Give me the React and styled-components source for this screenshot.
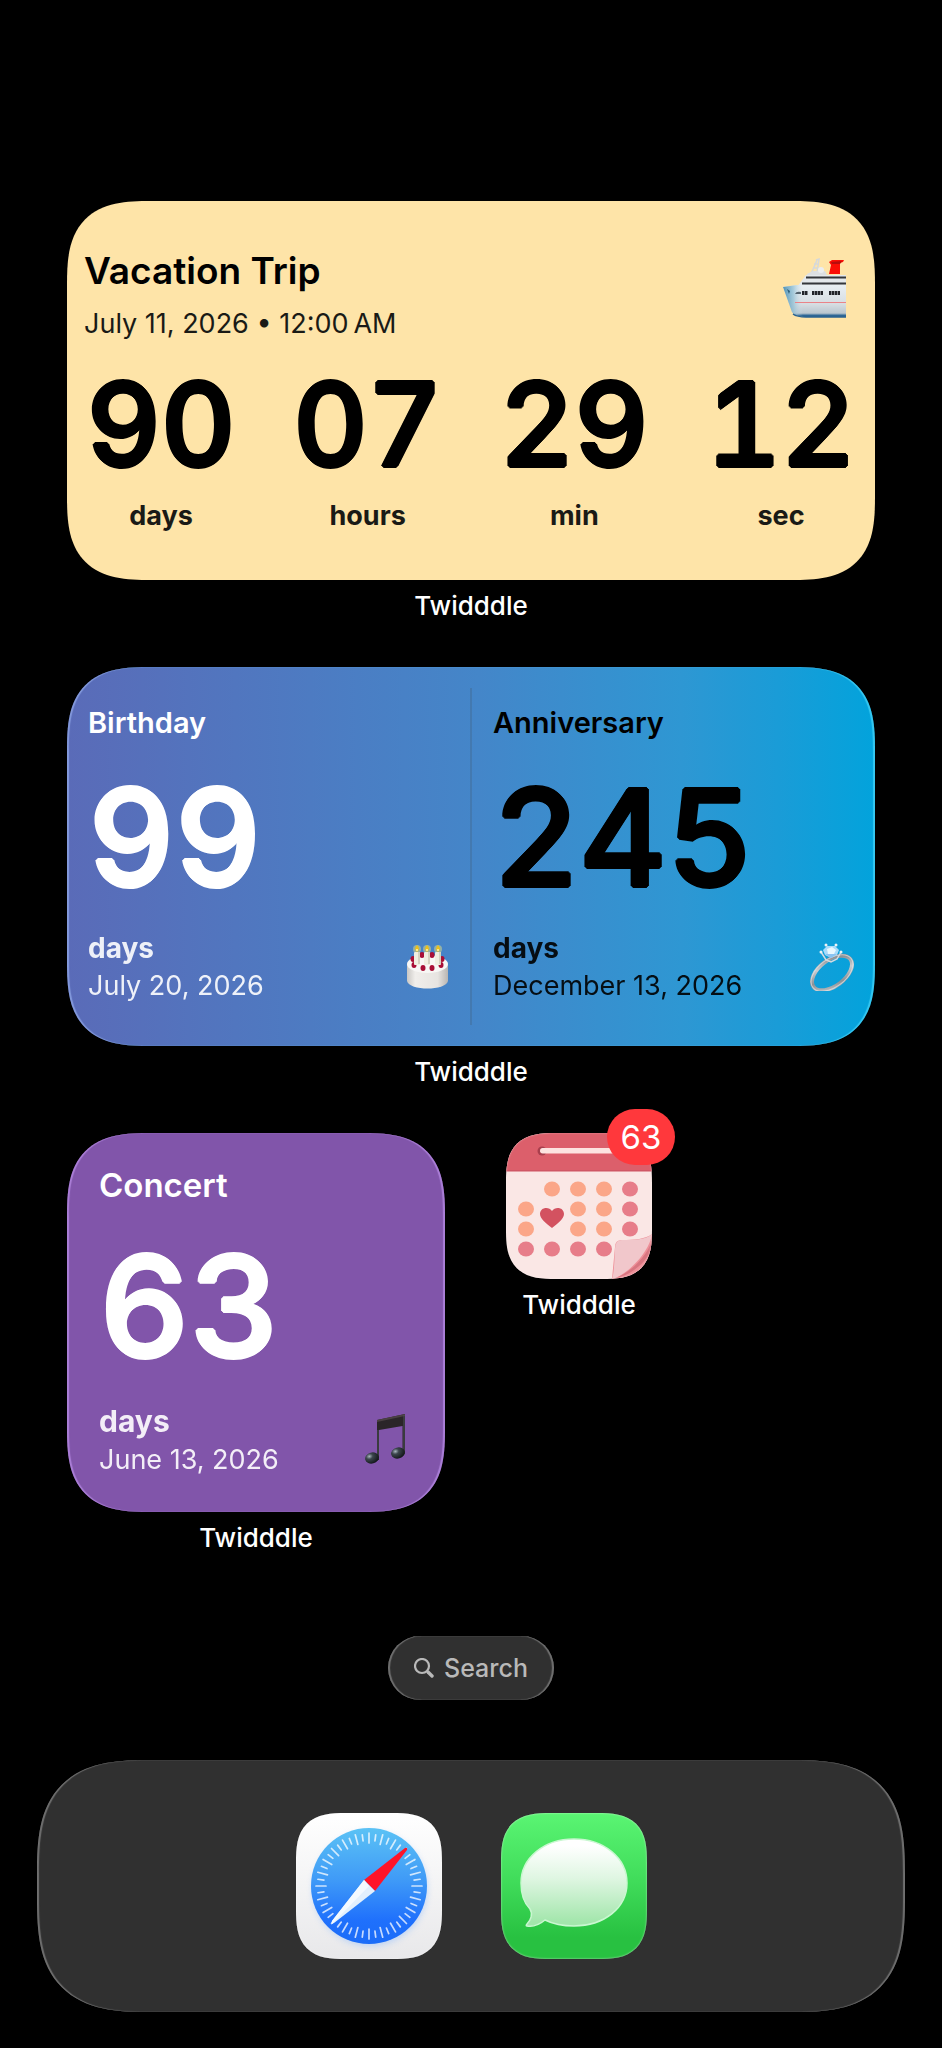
import React from 'react';
import styled, { createGlobalStyle, css } from 'styled-components';

const units = [
  { value: '90', label: 'days' },
  { value: '07', label: 'hours' },
  { value: '29', label: 'min' },
  { value: '12', label: 'sec' },
];

const ORANGE = '#fba688';
const PINK = '#e77d89';

const calendarDots = [
  [46, 56, ORANGE], [72, 56, ORANGE], [98, 56, ORANGE], [124, 56, PINK],
  [20, 76, ORANGE], [72, 76, ORANGE], [98, 76, ORANGE], [124, 76, PINK],
  [20, 96, ORANGE], [72, 96, ORANGE], [98, 96, ORANGE], [124, 96, PINK],
  [20, 116, PINK], [46, 116, PINK], [72, 116, PINK], [98, 116, PINK],
];

const ShipIcon = () => (
  <svg width="64" height="62" viewBox="0 0 64 62" aria-hidden="true">
    <defs>
      <linearGradient id="hull" x1="0" y1="0" x2="0" y2="1">
        <stop offset="0" stopColor="#e9eff3" />
        <stop offset="0.6" stopColor="#d6dde2" />
        <stop offset="0.88" stopColor="#b9c6cf" />
        <stop offset="0.95" stopColor="#2d6695" />
      </linearGradient>
      <linearGradient id="bow" x1="0" y1="0" x2="1" y2="0">
        <stop offset="0" stopColor="#4d90b4" />
        <stop offset="0.32" stopColor="#8fbfd4" stopOpacity="0.7" />
        <stop offset="0.6" stopColor="#d6e2ea" stopOpacity="0" />
      </linearGradient>
    </defs>
    <path d="M29 17 L35 3 M34 3 L37 2 L35 16 M31 11 H36 M32 7 H37" stroke="#d5d8da" strokeWidth="1.500" fill="none" />
    <path d="M25 17 L31 14 H43 L45 18 H25Z" fill="#dcdfe2" />
    <circle cx="39" cy="13" r="3" fill="#eceef0" />
    <path d="M47 17 L49 8 L47 5 L50 3 L62 3 L61 5 L58 6 L58 17Z" fill="#fb0d05" />
    <path d="M49 5 L60 4 L58 7 L50 7Z" fill="#b70c0c" />
    <path d="M15 30 L24 18 H64 V32 H15Z" fill="#e4e8eb" />
    <path d="M24 20.500 H64 M20 26.500 H64" stroke="#34363b" strokeWidth="2" />
    <path d="M1 30 L15 28 H64 V60 H22 Q12 59 10 55 Z" fill="url(#hull)" />
    <path d="M1 30 L15 28 H34 V59 H22 Q12 59 10 55 Z" fill="url(#bow)" />
    <path d="M5 32 L8 34 L7 37Z" fill="#2d5d78" />
    <path d="M13 37 Q14 34 19 35 V37Z" fill="#54636e" />
    <path d="M20 36 h6 M30 36 h11 M47 36 h11" stroke="#222429" strokeWidth="4" strokeDasharray="2.400 0.500" />
    <path d="M13 45.500 H64" stroke="#ea8388" strokeWidth="1.200" />
    <path d="M11 57 Q15 60 24 60 H64" stroke="#2a6290" strokeWidth="1.500" fill="none" />
  </svg>
);

const CakeIcon = () => (
  <svg width="48" height="48" viewBox="0 0 48 48" aria-hidden="true">
    <defs>
      <linearGradient id="cake" x1="0" y1="0" x2="1" y2="0">
        <stop offset="0" stopColor="#c9c7c4" />
        <stop offset="0.2" stopColor="#f0eeeb" />
        <stop offset="0.75" stopColor="#e7e4e1" />
        <stop offset="1" stopColor="#b8b5b2" />
      </linearGradient>
    </defs>
    <path d="M4 21 V38 C6 48 43 48 45 38 V21Z" fill="url(#cake)" />
    <ellipse cx="24.500" cy="21" rx="20.500" ry="9" fill="#f8f7f5" />
    {[[19, 12], [29, 12], [10, 16], [39, 16], [11, 22], [38, 22], [20, 25], [29, 25]].map(([x, y]) => (
      <ellipse key={`${x}-${y}`} cx={x} cy={y} rx="2.500" ry="3" fill="#a90f36" />
    ))}
    {[14, 24, 35].map(x => (
      <g key={x}>
        <circle cx={x} cy="6" r="4" fill="#f6ec7e" opacity="0.45" />
        <rect x={x - 3} y="9" width="6" height="13" rx="1" fill="#f0eee0" />
        <path d={`M${x + 1} 9 h2 v12 h-2z`} fill="#d5d2c0" />
        <path d={`M${x} 2 q4 4 0 7 q-4 -3 0 -7`} fill="#e9c020" />
        <circle cx={x} cy="7" r="1" fill="#fff6bd" />
      </g>
    ))}
  </svg>
);

const RingIcon = () => (
  <svg width="48" height="48" viewBox="0 0 48 48" aria-hidden="true">
    <defs>
      <linearGradient id="band" x1="0" y1="1" x2="1" y2="0">
        <stop offset="0" stopColor="#d7d9db" />
        <stop offset="0.3" stopColor="#8c9196" />
        <stop offset="0.6" stopColor="#c9ccd0" />
        <stop offset="1" stopColor="#666a70" />
      </linearGradient>
    </defs>
    <ellipse cx="24" cy="30" rx="23" ry="13" transform="rotate(-37 24 30)" fill="none" stroke="url(#band)" strokeWidth="4" />
    <ellipse cx="24" cy="30" rx="24" ry="14" transform="rotate(-37 24 30)" fill="none" stroke="#e4e6e8" strokeWidth="1" opacity="0.7" />
    <path d="M13 9 L18 17 L23 19 L29 16 L33 9" fill="none" stroke="#d3dae0" strokeWidth="1.500" />
    <path d="M15 7 L19 3 H27 L31 7 L29 12 L23 15 L17 12Z" fill="#a9dcfb" />
    <path d="M19 6 L24 4 L28 7 L26 11 L20 11Z" fill="#e9f8ff" />
    <path d="M17 11 L23 15 L29 11" fill="#7cb8ec" opacity="0.7" />
    {[[13, 9], [18, 2], [28, 2], [33, 9]].map(([x, y]) => (
      <circle key={x} cx={x} cy={y} r="1.500" fill="#eef1f4" />
    ))}
  </svg>
);

const MusicIcon = () => (
  <svg width="48" height="52" viewBox="0 0 48 52" aria-hidden="true">
    <defs>
      <radialGradient id="note" cx="0.35" cy="0.3" r="0.7">
        <stop offset="0" stopColor="#a9b7bf" />
        <stop offset="0.35" stopColor="#3c464d" />
        <stop offset="1" stopColor="#14181b" />
      </radialGradient>
    </defs>
    <path d="M15 7 L43 1 V41 H40.500 V13 L17 17 V47 H15Z" fill="#2a2528" />
    <path d="M15 7 L43 1 V3 L15 9Z" fill="#4a4043" />
    <path d="M42 2 V42 M16 17 V46" stroke="#4a5357" strokeWidth="1" />
    <ellipse cx="10" cy="45" rx="7" ry="5.500" transform="rotate(-15 10 45)" fill="url(#note)" />
    <ellipse cx="36" cy="40" rx="7" ry="5.500" transform="rotate(-15 36 40)" fill="url(#note)" />
  </svg>
);

const CalendarIcon = () => (
  <svg width="146" height="146" viewBox="0 0 146 146" aria-hidden="true">
    <rect width="146" height="146" fill="#fae7e5" />
    <rect width="146" height="38" fill="#dc5f6b" />
    <rect y="37" width="146" height="1.500" fill="#cf5765" />
    <circle cx="36" cy="18" r="4.500" fill="#a93f4d" />
    <rect x="34" y="15" width="86" height="5.500" rx="2.700" fill="#fde3e0" />
    {calendarDots.map(([x, y, fill]) => (
      <ellipse key={`${x}-${y}`} cx={x} cy={y} rx="8" ry="7.400" fill={fill} />
    ))}
    <path d="M46 95 C40 90 34 86 34 81 C34 74 43 73 46 78 C49 73 58 74 58 81 C58 86 52 90 46 95Z" fill="#d35260" />
    <path d="M106 146 L109 114 Q109 107 116 107 C128 107 140 106 146 101 V146Z" fill="#ee8f98" />
    <path d="M106 146 Q108 142 109 116 Q109 107 116 107 C128 107 140 107 146 101 C144 118 122 142 106 146Z" fill="#f1c7cb" />
    <path d="M146 108 C140 124 126 138 110 145 C126 142 142 128 146 114Z" fill="#d87580" />
  </svg>
);

const SafariIcon = () => (
  <svg width="146" height="146" viewBox="0 0 146 146" aria-hidden="true">
    <defs>
      <linearGradient id="plate" x1="0" y1="0" x2="0" y2="1">
        <stop offset="0" stopColor="#ffffff" />
        <stop offset="1" stopColor="#e8e8ea" />
      </linearGradient>
      <linearGradient id="dial" x1="0" y1="0" x2="0" y2="1">
        <stop offset="0" stopColor="#5bc2f5" />
        <stop offset="0.45" stopColor="#3f9af7" />
        <stop offset="0.8" stopColor="#1f70fc" />
        <stop offset="1" stopColor="#1b6cf8" />
      </linearGradient>
      <filter id="dialGlow" x="-20%" y="-20%" width="140%" height="140%">
        <feGaussianBlur stdDeviation="3" />
      </filter>
    </defs>
    <rect width="146" height="146" fill="url(#plate)" />
    <circle cx="74" cy="76" r="57" fill="#9cc3fb" opacity="0.6" filter="url(#dialGlow)" />
    <circle cx="73" cy="73" r="58" fill="url(#dial)" />
    {Array.from({ length: 48 }, (_, i) => (
      <line
        key={i}
        x1="73"
        y1={i % 2 ? 21.5 : 20}
        x2="73"
        y2={i % 2 ? 27.5 : 30}
        stroke="#ffffff"
        strokeOpacity="0.75"
        strokeWidth="1.700"
        strokeLinecap="round"
        transform={`rotate(${i * 7.5} 73 73)`}
      />
    ))}
    <path d="M68 67 L109 35 Q112 34 111 37 L79 78Z" fill="#ff1428" />
    <path d="M68 67 L79 78 L38 110 Q34 112 36 108Z" fill="#e2f0fd" />
    <path d="M68 67 L73 73 L36 111 L36 108Z" fill="#f4faff" />
  </svg>
);

const MessagesIcon = () => (
  <svg width="146" height="146" viewBox="0 0 146 146" aria-hidden="true">
    <defs>
      <linearGradient id="green" x1="0" y1="0" x2="0" y2="1">
        <stop offset="0" stopColor="#5af573" />
        <stop offset="0.5" stopColor="#3eda58" />
        <stop offset="0.85" stopColor="#28c141" />
      </linearGradient>
      <linearGradient id="bubble" x1="0" y1="0" x2="0" y2="1">
        <stop offset="0.08" stopColor="#ffffff" />
        <stop offset="0.45" stopColor="#dff6e2" />
        <stop offset="0.95" stopColor="#a3e6ac" />
      </linearGradient>
    </defs>
    <rect width="146" height="146" fill="url(#green)" />
    <path
      d="M73 26 C103 26 126 45 126 70 C126 95 103 113 73 113 C62 113 52 111 44 107 C38 112 31 114 26 113 C25 113 25 112 26 111 C30 107 32 101 29 96 C22 89 20 80 20 70 C20 45 43 26 73 26Z"
      fill="url(#bubble)"
      stroke="#c9f7d0"
      strokeWidth="1.500"
    />
  </svg>
);

const SearchIcon = () => (
  <svg width="20" height="20" viewBox="0 0 20 20" fill="none" stroke="currentColor" strokeLinecap="round" aria-hidden="true">
    <circle cx="8" cy="8" r="7" strokeWidth="2.200" />
    <path d="M14 14 L18 18" strokeWidth="3.400" />
  </svg>
);

const Event = ({ title, count, date, icon, ...rest }) => (
  <EventPanel {...rest}>
    <EventTitle>{title}</EventTitle>
    <Digits>{count}</Digits>
    <EventFooter>
      <div>
        <EventUnit>days</EventUnit>
        <EventDate>{date}</EventDate>
      </div>
      {icon}
    </EventFooter>
  </EventPanel>
);

export default function App() {
  return (
    <Screen>
      <GlobalStyle />
      <Grid>
        <Widget $wide>
          <Countdown>
            <CountdownHeader>
              <div>
                <TripTitle>Vacation Trip</TripTitle>
                <TripDate>July 11, 2026 • 12:00&#8201;AM</TripDate>
              </div>
              <ShipIcon />
            </CountdownHeader>
            <Units>
              {units.map(({ value, label }) => (
                <Unit key={label}>
                  <Digits $small>{value}</Digits>
                  <UnitLabel>{label}</UnitLabel>
                </Unit>
              ))}
            </Units>
          </Countdown>
          <Caption>Twidddle</Caption>
        </Widget>

        <Widget $wide>
          <Pair>
            <Event title="Birthday" count="99" date="July 20, 2026" icon={<CakeIcon />} />
            <Divider />
            <Event $dark title="Anniversary" count="245" date="December 13, 2026" icon={<RingIcon />} />
          </Pair>
          <Caption>Twidddle</Caption>
        </Widget>

        <Widget>
          <Single>
            <Event $roomy title="Concert" count="63" date="June 13, 2026" icon={<MusicIcon />} />
          </Single>
          <Caption>Twidddle</Caption>
        </Widget>

        <Apps>
          <AppTile>
            <AppButton aria-label="Twidddle">
              <IconMask><CalendarIcon /></IconMask>
              <Badge>63</Badge>
            </AppButton>
            <Caption>Twidddle</Caption>
          </AppTile>
        </Apps>
      </Grid>

      <SearchButton>
        <SearchIcon />
        Search
      </SearchButton>

      <Dock>
        <AppButton aria-label="Safari">
          <IconMask $glow><SafariIcon /></IconMask>
        </AppButton>
        <AppButton aria-label="Messages">
          <IconMask $glow><MessagesIcon /></IconMask>
        </AppButton>
      </Dock>
    </Screen>
  );
}

const GlobalStyle = createGlobalStyle`
  * {
    box-sizing: border-box;
  }

  body {
    margin: 0;
    background: #000;
    font-family: Inter, "Liberation Sans", sans-serif;
    font-optical-sizing: none;
  }

  h2, p {
    margin: 0;
  }

  button {
    padding: 0;
    border: 0;
    background: none;
    font-family: inherit;
    cursor: pointer;
  }

  svg {
    display: block;
    flex: none;
  }
`

// continuous corners where the browser has them, plain round ones elsewhere
const corners = (round, smooth) => css`
  border-radius: ${round}px;

  @supports (corner-shape: superellipse(1.5)) {
    border-radius: ${smooth}px;
    corner-shape: superellipse(1.5);
  }
`

const Screen = styled.main`
  display: flex;
  flex-direction: column;
  align-items: center;
  min-height: 100vh;
  padding: 201px 37px 36px;
  color: #fff;
`

const Grid = styled.div`
  display: grid;
  grid-template-columns: 1fr 1fr;
  gap: 46px 52px;
  align-self: stretch;
  padding: 0 30px;
`

const Widget = styled.section`
  grid-column: ${({ $wide }) => ($wide ? 'span 2' : 'auto')};
`

const Card = styled.div`
  min-height: 379px;
  overflow: hidden;
  ${corners(68, 84)}
`

const Caption = styled.div`
  margin-top: 11px;
  font-size: 26px;
  font-weight: 500;
  line-height: 30px;
  text-align: center;
`

const Countdown = styled(Card)`
  padding: 47px 16px 0;
  background: #fee4a8;
  color: #000;
`

const CountdownHeader = styled.header`
  display: flex;
  justify-content: space-between;
  align-items: center;
  padding: 0 13px 0 1px;
  margin-bottom: 34px;

  & svg {
    margin-bottom: 14px;
  }
`

const TripTitle = styled.h2`
  margin-bottom: 13px;
  font-size: 37px;
  font-weight: 600;
  line-height: 46px;
`

const TripDate = styled.p`
  font-size: 27px;
  line-height: 34px;
  color: #1a1a16;
`

const Units = styled.div`
  display: flex;
  justify-content: space-between;
`

const Unit = styled.div`
  min-width: 156px;
  text-align: center;
`

// the ring of shadows rounds off the ends of the strokes
const Digits = styled.div`
  font-size: ${({ $small }) => ($small ? 115 : 134)}px;
  font-weight: 550;
  line-height: ${({ $small }) => ($small ? 100 : 120)}px;
  font-variant-numeric: tabular-nums;
  text-shadow: 2px 0, -2px 0, 0 2px, 0 -2px, 1px 1px, -1px 1px, 1px -1px, -1px -1px;
`

const UnitLabel = styled.div`
  margin-top: 24px;
  font-size: 27px;
  font-weight: 700;
  line-height: 34px;
  color: #1a1a16;
`

const Pair = styled(Card)`
  display: grid;
  grid-template-columns: 1fr 2px 1fr;
  background: linear-gradient(90deg, #5a6bb8, #4486c9 51%, #2e97d3 76%, #1a9cd7 88%, #02a3dc);
  box-shadow: inset 2px 0 1px rgba(160, 185, 245, 0.6), inset -2px 0 1px rgba(90, 225, 255, 0.6);
`

const Divider = styled.div`
  margin: 21px 0;
  background: #4379b0;
`

const Single = styled(Card)`
  background: #8155aa;
  box-shadow: inset 2px 0 1px rgba(190, 145, 235, 0.7), inset -2px 0 1px rgba(190, 145, 235, 0.7);
`

const EventTitle = styled.h2`
  margin-bottom: 36px;
  font-size: 29px;
  font-weight: 600;
  line-height: 36px;
`

const EventFooter = styled.div`
  display: flex;
  justify-content: space-between;
  align-items: flex-end;
  margin-top: 32px;

  & svg {
    margin-bottom: 14px;
  }
`

const EventUnit = styled.div`
  font-size: 28px;
  font-weight: 700;
  line-height: 38px;
`

const EventDate = styled.div`
  font-size: 27px;
  line-height: 38px;
`

const EventPanel = styled.div`
  padding: 38px 19px 0 21px;
  color: ${({ $dark }) => ($dark ? '#000' : '#fff')};

  & ${EventUnit}, & ${EventDate} {
    opacity: 0.9;
  }

  ${({ $roomy }) => $roomy && css`
    padding: 33px 35px 0 32px;

    & ${EventTitle} {
      margin-bottom: 42px;
      font-size: 33px;
      line-height: 38px;
    }

    & ${Digits} {
      font-size: 140px;
    }

    & ${EventFooter} {
      margin-top: 35px;
    }

    & ${EventUnit} {
      font-size: 30px;
      line-height: 40px;
    }
  `}
`

const Apps = styled.div`
  display: flex;
  align-items: flex-start;
  padding: 0 9px;
`

const AppTile = styled.div`
  width: 146px;
`

const AppButton = styled.button`
  position: relative;
  display: block;
`

const IconMask = styled.span`
  display: block;
  overflow: hidden;
  ${corners(38, 50)}

  &::after {
    content: '';
    position: absolute;
    inset: 0;
    box-shadow: inset 0 0 2px ${({ $glow }) => ($glow ? 'rgba(255, 255, 255, 0.7)' : 'rgba(255, 255, 255, 0.4)')};
    ${corners(38, 50)}
  }
`

const Badge = styled.span`
  position: absolute;
  top: -24px;
  right: -23px;
  width: 68px;
  border-radius: 28px;
  background: #ff383c;
  color: #fff;
  font-size: 33px;
  line-height: 56px;
  text-align: center;
`

const SearchButton = styled.button`
  display: flex;
  align-items: center;
  gap: 10px;
  height: 64px;
  margin-top: 83px;
  padding: 0 26px;
  border-radius: 32px;
  background: #303030;
  box-shadow: inset 2px 0 1px #707070, inset -2px 0 1px #707070;
  color: #b9b9b9;
  font-size: 25px;
  font-weight: 500;
`

const Dock = styled.nav`
  display: flex;
  justify-content: center;
  gap: 59px;
  align-self: stretch;
  margin-top: auto;
  padding: 53px;
  background: #303030;
  box-shadow: inset 2px 0 1px #707070, inset -2px 0 1px #707070;
  ${corners(90, 114)}
`
